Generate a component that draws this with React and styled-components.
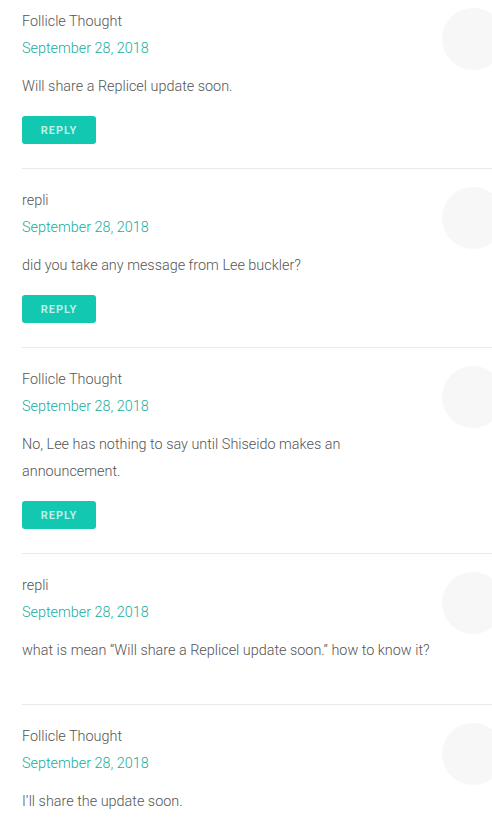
import React from "react";
import styled, { createGlobalStyle } from "styled-components";

const Global = createGlobalStyle`
  html, body { margin: 0; padding: 0; background: #fff; overflow-x: hidden; }
  body { font-family: Roboto, "Open Sans", sans-serif; }
`;

const List = styled.div`
  margin-left: 22px;
  width: 482px;
`;

const Article = styled.article`
  display: flex;
  align-items: flex-start;
  gap: 8px;
  padding: ${(p) => (p.$first ? "8px" : "18px")} 0 24px;
  border-bottom: ${(p) => (p.$last ? "none" : "1px solid #e9e9e9")};
`;

const Content = styled.div`
  flex: 1;
  min-width: 0;
  display: flex;
  flex-direction: column;
  align-items: flex-start;
`;

const Name = styled.div`
  margin-top: 4px;
  font-size: 14.4px;
  line-height: 20px;
  font-weight: 300;
  color: #555;
`;

const DateText = styled.div`
  margin-top: 7px;
  font-size: 14.4px;
  line-height: 20px;
  font-weight: 300;
  color: #16ad9c;
`;

const Body = styled.p`
  margin: 13.5px 0 16.5px;
  font-size: 14.4px;
  line-height: 27px;
  font-weight: 300;
  color: #555;
`;

const ReplyButton = styled.button`
  width: 74px;
  height: 28px;
  border: none;
  border-radius: 3px;
  background: #13c8b1;
  color: rgba(255, 255, 255, 0.72);
  font-family: Roboto, sans-serif;
  font-weight: 700;
  font-size: 11px;
  letter-spacing: 1px;
  padding: 0;
  cursor: pointer;
`;

const Avatar = styled.div`
  flex-shrink: 0;
  width: 62px;
  height: 62px;
  border-radius: 50%;
  background: #f7f7f7;
`;

const comments = [
  { name: "Follicle Thought", text: "Will share a Replicel update soon.", reply: true },
  { name: "repli", text: "did you take any message from Lee buckler?", reply: true },
  { name: "Follicle Thought", text: "No, Lee has nothing to say until Shiseido makes an announcement.", reply: true },
  { name: "repli", text: "what is mean \u201cWill share a Replicel update soon.\u201d how to know it?", reply: false },
  { name: "Follicle Thought", text: "I\u2019ll share the update soon.", reply: false },
];

export default function App() {
  return (
    <>
      <Global />
      <List>
        {comments.map((c, i) => (
          <Article key={i} $first={i === 0} $last={i === comments.length - 1}>
            <Content>
              <Name>{c.name}</Name>
              <DateText>September 28, 2018</DateText>
              <Body>{c.text}</Body>
              {c.reply && <ReplyButton>REPLY</ReplyButton>}
            </Content>
            <Avatar />
          </Article>
        ))}
      </List>
    </>
  );
}
